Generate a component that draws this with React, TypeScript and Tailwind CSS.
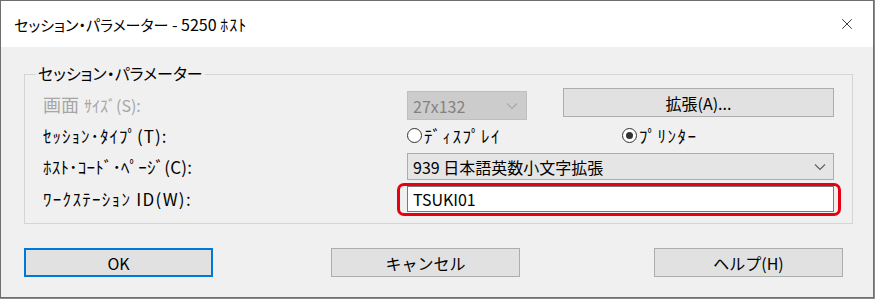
import { X } from "lucide-react";

const font = "font-['Noto_Sans_CJK_JP','Noto_Sans',sans-serif]";

function Chevron({ color }: { color: string }) {
  return (
    <svg width="12" height="8" viewBox="0 0 12 8" className="shrink-0">
      <path d="M1 1.5 L6 6.5 L11 1.5" fill="none" stroke={color} strokeWidth="1.2" />
    </svg>
  );
}

function Radio({ checked, label }: { checked?: boolean; label: string }) {
  return (
    <label className="flex items-center gap-[2px]">
      <span className="w-[15px] h-[15px] rounded-full border border-[#333] bg-white flex items-center justify-center">
        {checked && <span className="w-[7px] h-[7px] rounded-full bg-[#333]" />}
      </span>
      <span className="text-[17px] leading-[18px] tracking-[1.5px] text-black">{label}</span>
    </label>
  );
}

function Button({ label, primary }: { label: string; primary?: boolean }) {
  return (
    <button
      className={
        "w-[189px] h-[29px] bg-[#e1e1e1] text-[16px] leading-[18px] text-black flex items-center justify-center " +
        (primary ? "border-2 border-[#0078d7]" : "border border-[#adadad]")
      }
    >
      {label}
    </button>
  );
}

export default function App() {
  return (
    <div className={`w-[875px] h-[299px] bg-[#8c8c8c] ${font}`}>
      <div className="w-[874px] h-[298px] border border-[#6e6e6e] bg-[#f0f0f0] flex flex-col">
        {/* title bar */}
        <div className="h-[46px] bg-white flex items-center justify-between pl-[13px] pr-[17px]">
          <span className="text-[16px] text-black pt-[1px] whitespace-pre">
            <span className="text-[15px] [font-feature-settings:'palt']">セッション・パラメーター</span>
            {" - 5250 "}
            <span className="tracking-[1px]">ﾎｽﾄ</span>
          </span>
          <X size={18} strokeWidth={1.1} className="text-[#111]" />
        </div>

        {/* group box */}
        <div className="relative ml-[23px] mt-[27px] w-[829px] border border-[#d5d5d5] px-[18px] pt-[13px] pb-[11px]">
          <span className="absolute left-[11px] -top-[11px] px-[2px] bg-[#f0f0f0] text-[16px] leading-[18px] text-black [font-feature-settings:'palt']">
            セッション・パラメーター
          </span>

          <div className="flex h-[33px]">
            <div className="w-[364px] flex items-center text-[16px] text-[#a6a6a6]">
              <span className="text-[18px] mr-[5px]">画面</span>
              <span>ｻｲｽﾞ(S):</span>
            </div>
            <div className="flex-1 flex items-start">
              <div className="mt-[3px] w-[120px] h-[29px] bg-[#cccccc] border border-[#bfbfbf] flex items-center justify-between pl-[5px] pr-[8px] text-[16px] text-[#838383]">
                <span>27x132</span>
                <Chevron color="#a8a8a8" />
              </div>
              <button className="ml-[36px] w-[271px] h-[29px] bg-[#e1e1e1] border border-[#adadad] text-[16px] text-black flex items-center justify-center">
                拡張(A)...
              </button>
            </div>
          </div>

          <div className="flex h-[29px] items-center">
            <div className="w-[364px] text-[17px] tracking-[1px] text-black">ｾｯｼｮﾝ･ﾀｲﾌﾟ(T):</div>
            <div className="flex-1 flex items-center">
              <div className="w-[215px]">
                <Radio label="ﾃﾞｨｽﾌﾟﾚｲ" />
              </div>
              <Radio checked label="ﾌﾟﾘﾝﾀｰ" />
            </div>
          </div>

          <div className="flex mt-[3px] h-[27px] items-center">
            <div className="w-[364px] text-[17px] tracking-[0.2px] text-black">ﾎｽﾄ･ｺｰﾄﾞ･ﾍﾟｰｼﾞ(C):</div>
            <div className="flex-1 h-full bg-[#e5e5e5] border border-[#acacac] flex items-center justify-between pl-[5px] pr-[7px] text-[16px] text-black">
              <span>939 日本語英数小文字拡張</span>
              <Chevron color="#606060" />
            </div>
          </div>

          <div className="flex mt-[6px] h-[26px] items-center">
            <div className="w-[364px] text-[17px] tracking-[1.3px] text-black">ﾜｰｸｽﾃｰｼｮﾝ ID(W):</div>
            <div className="relative flex-1 h-full">
              <div className="h-full bg-white border border-[#7a7a7a] flex items-center pl-[5px] text-[16px] text-black">
                TSUKI01
              </div>
              <div className="absolute -left-[10px] -right-[7px] -top-[3px] -bottom-[4px] border-[3px] border-[#e60012] rounded-[7px]" />
            </div>
          </div>
        </div>

        {/* buttons */}
        <div className="flex mt-[24px] pl-[23px]">
          <Button label="OK" primary />
          <div className="ml-[118px]">
            <Button label="キャンセル" />
          </div>
          <div className="ml-[134px]">
            <Button label="ヘルプ(H)" />
          </div>
        </div>
      </div>
    </div>
  );
}
